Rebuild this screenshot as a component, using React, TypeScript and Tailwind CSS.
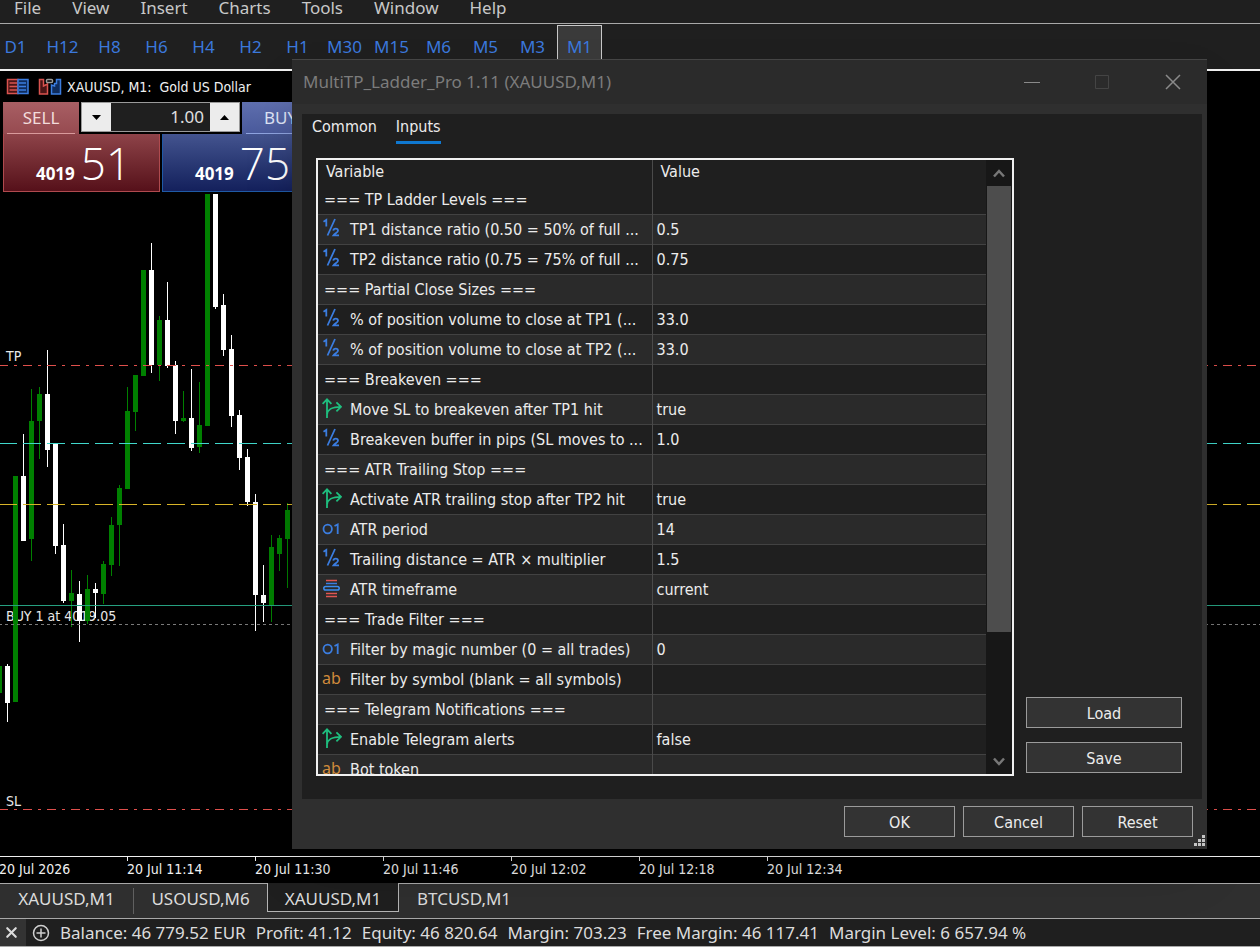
import { useState } from 'react';
import { X } from 'lucide-react';

type InputKind = 'double' | 'bool' | 'int' | 'enum' | 'string' | 'group';

interface InputRow {
  kind: InputKind;
  label: string;
  value: string;
}

interface Candle {
  x: number;
  high: number;
  top: number;
  bottom: number;
  low: number;
  up: boolean;
}

const menus = ['File', 'View', 'Insert', 'Charts', 'Tools', 'Window', 'Help'];

const timeframes = ['D1', 'H12', 'H8', 'H6', 'H4', 'H2', 'H1', 'M30', 'M15', 'M6', 'M5', 'M3', 'M1'];

const timeLabels = [
  '20 Jul 2026',
  '20 Jul 11:14',
  '20 Jul 11:30',
  '20 Jul 11:46',
  '20 Jul 12:02',
  '20 Jul 12:18',
  '20 Jul 12:34',
];

const account = [
  'Balance: 46 779.52 EUR',
  'Profit: 41.12',
  'Equity: 46 820.64',
  'Margin: 703.23',
  'Free Margin: 46 117.41',
  'Margin Level: 6 657.94 %',
];

const inputRows: InputRow[] = [
  { kind: 'group', label: '=== TP Ladder Levels ===', value: '' },
  { kind: 'double', label: 'TP1 distance ratio (0.50 = 50% of full ...', value: '0.5' },
  { kind: 'double', label: 'TP2 distance ratio (0.75 = 75% of full ...', value: '0.75' },
  { kind: 'group', label: '=== Partial Close Sizes ===', value: '' },
  { kind: 'double', label: '% of position volume to close at TP1 (...', value: '33.0' },
  { kind: 'double', label: '% of position volume to close at TP2 (...', value: '33.0' },
  { kind: 'group', label: '=== Breakeven ===', value: '' },
  { kind: 'bool', label: 'Move SL to breakeven after TP1 hit', value: 'true' },
  { kind: 'double', label: 'Breakeven buffer in pips (SL moves to ...', value: '1.0' },
  { kind: 'group', label: '=== ATR Trailing Stop ===', value: '' },
  { kind: 'bool', label: 'Activate ATR trailing stop after TP2 hit', value: 'true' },
  { kind: 'int', label: 'ATR period', value: '14' },
  { kind: 'double', label: 'Trailing distance = ATR × multiplier', value: '1.5' },
  { kind: 'enum', label: 'ATR timeframe', value: 'current' },
  { kind: 'group', label: '=== Trade Filter ===', value: '' },
  { kind: 'int', label: 'Filter by magic number (0 = all trades)', value: '0' },
  { kind: 'string', label: 'Filter by symbol (blank = all symbols)', value: '' },
  { kind: 'group', label: '=== Telegram Notifications ===', value: '' },
  { kind: 'bool', label: 'Enable Telegram alerts', value: 'false' },
  { kind: 'string', label: 'Bot token', value: '' },
];

// x, high, body top, body bottom, low, bullish
const candles: Candle[] = (
  [
    [-1, 666, 666, 693, 693, 1],
    [7, 664, 666, 703, 722, 0],
    [15, 476, 476, 702, 702, 1],
    [23, 434, 476, 541, 541, 0],
    [31, 389, 421, 539, 561, 1],
    [39, 387, 394, 421, 459, 1],
    [47, 350, 394, 450, 467, 0],
    [55, 444, 444, 546, 554, 0],
    [63, 524, 545, 601, 603, 0],
    [71, 570, 593, 601, 627, 1],
    [79, 581, 594, 621, 642, 0],
    [87, 575, 589, 621, 624, 1],
    [95, 583, 589, 593, 618, 0],
    [103, 561, 564, 594, 604, 1],
    [111, 517, 525, 565, 576, 1],
    [119, 485, 488, 525, 566, 1],
    [127, 387, 411, 489, 489, 1],
    [135, 375, 375, 412, 431, 1],
    [143, 270, 270, 376, 376, 1],
    [151, 243, 270, 365, 373, 0],
    [159, 316, 320, 365, 381, 1],
    [167, 282, 320, 366, 368, 0],
    [175, 361, 365, 421, 434, 0],
    [183, 391, 418, 421, 422, 1],
    [191, 369, 418, 448, 451, 0],
    [199, 382, 425, 447, 453, 1],
    [207, 194, 194, 426, 426, 1],
    [215, 194, 194, 307, 309, 0],
    [223, 294, 305, 350, 356, 0],
    [231, 335, 349, 416, 427, 0],
    [239, 410, 415, 458, 470, 0],
    [247, 449, 457, 502, 506, 0],
    [255, 494, 502, 595, 631, 0],
    [263, 565, 595, 603, 622, 0],
    [271, 535, 547, 606, 622, 1],
    [279, 535, 538, 554, 571, 1],
    [287, 503, 510, 539, 588, 1],
  ] as const
).map(([x, high, top, bottom, low, up]) => ({ x, high, top, bottom, low, up: up === 1 }));

const levels = [
  { y: 365, color: '#e0504c', dash: '9 6 3 6' },
  { y: 443, color: '#40d8cc', dash: '18 6' },
  { y: 504, color: '#d8b428', dash: '18 6' },
  { y: 605, color: '#26a080', dash: undefined },
  { y: 624, color: '#7a7a7a', dash: '3 3' },
  { y: 809, color: '#e0504c', dash: '9 6 3 6' },
];

const chartLabels = [
  { y: 361, text: 'TP' },
  { y: 621, text: 'BUY 1 at 4019.05' },
  { y: 806, text: 'SL' },
];

const KindIcon = ({ kind }: { kind: InputKind }) => {
  if (kind === 'double') {
    return (
      <svg width="20" height="20" viewBox="0 0 20 20" fill="none" stroke="#3b7de0" strokeWidth="1.8">
        <path d="M1.5 3.8 4.3 2V8.5M13 1 5.5 17.5M11.3 12.6c.2-1.3 1.2-1.9 2.4-1.9 1.4 0 2.3.8 2.3 2 0 1.9-3.3 2.7-4.600 4.700H17" />
      </svg>
    );
  }
  if (kind === 'bool') {
    return (
      <svg width="20" height="20" viewBox="0 0 20 20" fill="none" stroke="#1fbf7f" strokeWidth="1.8">
        <path d="M5 20V1.5M.6 5.8 5 1.3 9.4 5.8M5 16.5C5.8 11.5 9 8.8 19 8.8M14.4 4.4 19 8.8 14.4 13.4" />
      </svg>
    );
  }
  if (kind === 'int') {
    return (
      <svg width="20" height="20" viewBox="0 0 20 20" fill="none" stroke="#3b7de0" strokeWidth="1.8">
        <ellipse cx="5.7" cy="11" rx="4.2" ry="4.3" />
        <path d="M12.5 8 15.7 6.5V16" />
      </svg>
    );
  }
  if (kind === 'enum') {
    return (
      <svg width="20" height="20" viewBox="0 0 20 20" fill="none">
        <path d="M4 2.5H15M4 15.5H15M4 18.5H15" stroke="#e05552" strokeWidth="1.5" />
        <path d="M4 5.5H15" stroke="#3b7de0" strokeWidth="1.5" />
        <rect x="1.8" y="8.5" width="15.4" height="3.6" rx="1.8" stroke="#3b8df0" strokeWidth="1.5" />
      </svg>
    );
  }
  return <span className="block w-5 font-['Noto_Sans',sans-serif] text-base leading-5 text-[#d08a3c]">ab</span>;
};

const Chart = () => (
  <svg className="absolute inset-0 h-full w-full" aria-label="XAUUSD M1 candles">
    <g transform="translate(0 -71)">
      {chartLabels.map((label) => (
        <text
          key={label.text}
          x="6"
          y={label.y}
          fill="#e8e8e8"
          className="font-['DejaVu_Sans_Condensed','DejaVu_Sans',sans-serif] text-sm"
        >
          {label.text}
        </text>
      ))}
      {candles.map((c) => (
        <g key={c.x} fill={c.up ? '#008000' : '#ffffff'}>
          <rect x={c.x} y={c.high} width="1" height={c.low - c.high} />
          <rect x={c.x - 2} y={c.top} width="5" height={c.bottom - c.top} />
        </g>
      ))}
      {levels.map((level) => (
        <line
          key={level.y}
          x1="-1"
          x2="100%"
          y1={level.y + 0.5}
          y2={level.y + 0.5}
          stroke={level.color}
          strokeDasharray={level.dash}
        />
      ))}
    </g>
  </svg>
);

const OneClickPanel = () => {
  const [volume, setVolume] = useState('1.00');

  const step = (delta: number) => {
    setVolume(Math.max(0.01, Number(volume) + delta).toFixed(2));
  };

  return (
    <div className="relative ml-[3px] w-[316px] text-white">
      <div className="flex h-8 justify-between">
        <button className="w-[76px] bg-linear-to-b from-[#a85f64] to-[#964a50] px-1 text-[17px] text-[#f3dcdc]">
          <span className="block h-8 border-b border-[#d99a9c] leading-8">SELL</span>
        </button>
        <div className="mb-[2px] flex w-[159px] border border-[#9a9a9a] bg-[#1f1f1f]">
          <button onClick={() => step(-0.01)} aria-label="Less volume" className="grid w-[29px] place-items-center bg-[#ececec]">
            <svg width="9" height="5" viewBox="0 0 9 5"><path d="M0 0h9L4.5 5z" fill="#000" /></svg>
          </button>
          <input
            value={volume}
            onChange={(e) => setVolume(e.target.value)}
            aria-label="Volume"
            className="min-w-0 flex-1 bg-transparent pr-1.5 text-right text-[17px] text-[#e0e0e0] outline-none"
          />
          <button onClick={() => step(0.01)} aria-label="More volume" className="grid w-[29px] place-items-center bg-[#ececec]">
            <svg width="9" height="5" viewBox="0 0 9 5"><path d="M0 5h9L4.5 0z" fill="#000" /></svg>
          </button>
        </div>
        <button className="w-[77px] bg-linear-to-b from-[#5f6fae] to-[#4a5a9c] px-1 text-[17px] text-[#dfe4f6]">
          <span className="block h-8 border-b border-[#8fa4e0] leading-8">BUY</span>
        </button>
      </div>
      <div className="flex gap-[2px]">
        <button className="flex h-[58px] w-[157px] items-baseline justify-center gap-1.5 border border-t-0 border-[#b04a4e] bg-linear-to-b from-[#8e4349] to-[#56101a] pl-1">
          <span className="text-[17px] font-bold">4019</span>
          <span className="font-['Open_Sans',sans-serif] text-[44px] leading-[58px] font-[350]">51</span>
        </button>
        <button className="flex h-[58px] w-[157px] items-baseline justify-center gap-1.5 border border-t-0 border-[#1f5aa6] bg-linear-to-b from-[#44548f] to-[#14205c] pl-1">
          <span className="text-[17px] font-bold">4019</span>
          <span className="font-['Open_Sans',sans-serif] text-[44px] leading-[58px] font-[350]">75</span>
        </button>
      </div>
    </div>
  );
};

const DialogButton = ({ label }: { label: string }) => (
  <button className="h-[31px] min-w-[111px] border border-[#9b9b9b] bg-[#333333] pt-[2px]">{label}</button>
);

const InputsTable = () => (
  <div className="flex h-[618px] min-w-0 flex-1 overflow-hidden border-2 border-[#f0f0f0]">
    <div className="min-w-0 flex-1">
      <table className="w-full table-fixed border-collapse">
        <thead>
          <tr className="h-6 text-left">
            <th className="w-1/2 border-r border-[#4a4a4a] px-2 font-normal">Variable</th>
            <th className="px-2 font-normal">Value</th>
          </tr>
        </thead>
        <tbody>
          {inputRows.map((row) => (
            <tr key={row.label} className="h-[30px] border-b border-[#424242] even:bg-[#2a2a2a]">
              <td className="border-r border-[#4a4a4a] p-0 pt-[2px]">
                {row.kind === 'group' ? (
                  <div className="pl-1.5 whitespace-nowrap">{row.label}</div>
                ) : (
                  <div className="flex items-center gap-2 pl-1">
                    <span className="-mt-1 shrink-0">
                      <KindIcon kind={row.kind} />
                    </span>
                    <span className="whitespace-nowrap">{row.label}</span>
                  </div>
                )}
              </td>
              <td className="px-1 pt-[2px] pb-0">{row.value}</td>
            </tr>
          ))}
        </tbody>
      </table>
    </div>

    {/* Scroll bar */}
    <div className="flex w-[26px] shrink-0 flex-col items-center bg-[#171717]">
      <button aria-label="Scroll up" className="grid h-[26px] place-items-center">
        <svg width="12" height="9" viewBox="0 0 12 9" fill="none" stroke="#777" strokeWidth="2.5"><path d="M1 7.5 6 2l5 5.5" /></svg>
      </button>
      <div className="h-[446px] w-6 bg-[#4d4d4d]" />
      <button aria-label="Scroll down" className="mt-auto grid h-[26px] place-items-center">
        <svg width="12" height="9" viewBox="0 0 12 9" fill="none" stroke="#777" strokeWidth="2.5"><path d="M1 1.5 6 7l5-5.5" /></svg>
      </button>
    </div>
  </div>
);

const PropertiesDialog = () => (
  <section
    role="dialog"
    aria-label="MultiTP_Ladder_Pro 1.11"
    className="absolute top-[59px] right-[53px] left-[292px] border-t border-[#454545] bg-[#2f2f2f] font-['DejaVu_Sans_Condensed','DejaVu_Sans',sans-serif] text-base text-[#ececec] shadow-2xl"
  >
    <header className="flex h-11 items-center justify-between bg-[#2b2b2b] pr-[25px] pl-[11px]">
      <h1 className="font-['Noto_Sans','Open_Sans',sans-serif] text-[17px] text-[#7c7c7c]">MultiTP_Ladder_Pro 1.11 (XAUUSD,M1)</h1>
      <div className="flex gap-[54px]">
        <button aria-label="Minimize">
          <svg width="16" height="16" stroke="#8a8a8a"><path d="M0 8.5h16" /></svg>
        </button>
        <button aria-label="Maximize" disabled>
          <svg width="16" height="16" fill="none" stroke="#444"><path d="M1.5 1.5h13v13h-13z" /></svg>
        </button>
        <button aria-label="Close">
          <svg width="18" height="16" stroke="#8a8a8a" strokeWidth="1.5"><path d="m2 1 14 14M16 1 2 15" /></svg>
        </button>
      </div>
    </header>

    <div className="mt-2.5 mr-[5px] ml-2.5 bg-[#1f1f1f] pb-[23px]">
      <div role="tablist" className="flex gap-[19px] pl-2.5">
        <button role="tab" aria-selected="false" className="h-[30px] border-b-3 border-transparent pb-[2px]">Common</button>
        <button role="tab" aria-selected="true" className="h-[30px] border-b-3 border-[#0f78d0] pb-[2px]">Inputs</button>
      </div>
      <div className="mt-3.5 flex gap-3 pr-5 pl-3.5">
        <InputsTable />
        <div className="flex w-[156px] flex-col justify-end gap-3.5 pb-[3px]">
          <DialogButton label="Load" />
          <DialogButton label="Save" />
        </div>
      </div>
    </div>

    <footer className="flex justify-end gap-2 pt-[7px] pr-3.5 pb-3">
      <DialogButton label="OK" />
      <DialogButton label="Cancel" />
      <DialogButton label="Reset" />
    </footer>
    <svg className="absolute right-[2px] bottom-[3px]" width="11" height="11" fill="#c4c4c4">
      <path d="M8 0h3v3H8zM4 4h3v3H4zM8 4h3v3H8zM0 8h3v3H0zM4 8h3v3H4zM8 8h3v3H8z" />
    </svg>
  </section>
);

const App = () => {
  const [timeframe, setTimeframe] = useState('M1');

  return (
    <div className="relative flex min-h-screen flex-col overflow-hidden bg-[#1f1f1f] font-['Noto_Sans','Open_Sans',sans-serif]">
      {/* Menu bar */}
      <nav className="flex h-6 gap-[31px] border-b border-[#a8a8a8] px-3.5 text-[17px] leading-4 text-[#c8c8c8]">
        {menus.map((menu) => (
          <button key={menu} className="h-4">{menu}</button>
        ))}
      </nav>

      {/* Timeframes */}
      <div className="-ml-2 flex h-[45px] text-[17px] text-[#3b78dc]">
        {timeframes.map((tf) => (
          <button
            key={tf}
            onClick={() => setTimeframe(tf)}
            className={
              tf === timeframe
                ? 'mx-px mt-px w-[45px] border border-b-0 border-[#c8c8c8] bg-[#3a3a3a] pb-[2px]'
                : 'w-[47px]'
            }
          >
            {tf}
          </button>
        ))}
      </div>

      {/* Chart */}
      <main className="relative flex-1 border-t-2 border-[#f0f0f0] bg-black">
        <Chart />
        <div className="relative flex h-[31px] items-center pl-1.5 font-['DejaVu_Sans_Condensed','DejaVu_Sans',sans-serif] text-[13px] text-[#f0f0f0]">
          <svg width="24" height="18" viewBox="0 0 24 18" fill="none" strokeWidth="1.5">
            <path d="M12 1.5H1.5v14H12z" fill="#4a1516" stroke="#d9534f" />
            <path d="M12 1.5h10v14H12z" fill="#0f2c5c" stroke="#3b7de0" />
            <path d="M3.5 5H11M3.5 8.5H11M3.5 12H11" stroke="#d9534f" />
            <path d="M13 5h7M13 8.5h7M13 12h7" stroke="#3b7de0" />
          </svg>
          <svg className="ml-2" width="24" height="18" viewBox="0 0 24 18" fill="none" strokeWidth="1.5">
            <path d="M1.5 1.5h4v6.500l4-2v10h-8z" fill="#4a1516" stroke="#d9534f" />
            <path d="M22.5 1.5h-4v4h-2v2.500l-3-1v9h9z" fill="#0f2c5c" stroke="#3b7de0" />
            <rect x="8.5" y="1.5" width="6" height="3" rx="1" stroke="#9a9a9a" />
          </svg>
          <span className="ml-[5px] text-sm whitespace-pre">XAUUSD, M1:  Gold US Dollar</span>
        </div>
        <OneClickPanel />
      </main>

      {/* Time axis */}
      <div className="-ml-px flex h-[27px] border-t border-[#f0f0f0] bg-black font-['DejaVu_Sans_Condensed','DejaVu_Sans',sans-serif] text-sm text-[#f0f0f0]">
        {timeLabels.map((label) => (
          <div key={label} className="w-32">
            <div className="h-1 w-px bg-[#f0f0f0]" />
            <div className="leading-4">{label}</div>
          </div>
        ))}
      </div>

      {/* Chart tabs */}
      <div className="flex h-[35px] bg-[#2f2f2f] text-[17px] text-[#dcdcdc]">
        <div className="flex w-[267px] border-t border-[#a8a8a8]">
          <button className="my-1 w-[134px] border-r border-[#606060] pb-1 leading-5">XAUUSD,M1</button>
          <button className="flex-1 pb-1">USOUSD,M6</button>
        </div>
        <button className="mb-1.5 w-[132px] border border-t-0 border-[#b4b4b4] bg-[#1f1f1f] pt-[3px]">XAUUSD,M1</button>
        <div className="flex flex-1 border-t border-[#a8a8a8]">
          <button className="px-[18px] pb-1">BTCUSD,M1</button>
        </div>
      </div>

      {/* Account summary */}
      <footer className="flex h-[29px] items-center border-y border-[#a8a8a8] text-[17px] whitespace-nowrap text-[#dcdcdc]">
        <button aria-label="Close toolbox" className="grid h-full w-[26px] place-items-center bg-[#333333] pr-1">
          <X size={17} strokeWidth={3} />
        </button>
        <svg className="mx-1.5" width="18" height="18" viewBox="0 0 18 18" fill="none" stroke="#d0d0d0" strokeWidth="1.5">
          <circle cx="9" cy="9" r="7.5" />
          <path d="M9 4.5v9M4.5 9h9" />
        </svg>
        <div className="flex gap-2.5 pl-1">
          {account.map((item) => (
            <span key={item}>{item}</span>
          ))}
        </div>
      </footer>

      <PropertiesDialog />
    </div>
  );
};

export default App;
